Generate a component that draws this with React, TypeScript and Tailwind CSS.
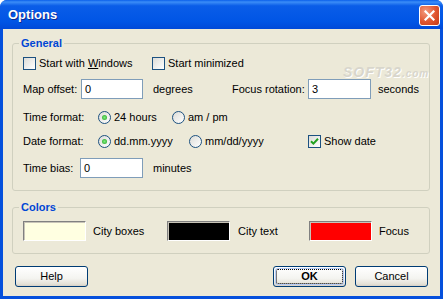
function Check({ checked }: { checked?: boolean }) {
  return (
    <span className="flex h-[13px] w-[13px] shrink-0 items-center justify-center border border-[#1C5180] bg-[linear-gradient(135deg,#DCDCD7,#FFFFFF)]">
      {checked && (
        <svg width="9" height="9" viewBox="0 0 9 9">
          <path d="M1 4.2 L3.4 6.6 L8 1.8" stroke="#21A121" strokeWidth="2" fill="none" />
        </svg>
      )}
    </span>
  );
}

function Radio({ checked }: { checked?: boolean }) {
  return (
    <span className="flex h-[13px] w-[13px] shrink-0 items-center justify-center rounded-full border border-[#1C5180] bg-[linear-gradient(135deg,#DCDCD7,#FFFFFF)]">
      {checked && <span className="h-[5px] w-[5px] rounded-full bg-[radial-gradient(circle,#7DEB7D,#21A121)]" />}
    </span>
  );
}

function Field({ value, w }: { value: string; w: string }) {
  return (
    <div className={`flex h-[20px] ${w} shrink-0 items-center border border-[#7F9DB9] bg-white pl-[3px]`}>
      {value}
    </div>
  );
}

function Swatch({ color }: { color: string }) {
  return (
    <div
      className={`h-[20px] w-[63px] shrink-0 border border-t-[#808080] border-l-[#808080] border-b-white border-r-white shadow-[inset_1px_1px_0_#C8C4B8] ${color}`}
    />
  );
}

function Button({ label, primary }: { label: string; primary?: boolean }) {
  return (
    <button className="flex h-[21px] w-[73px] rounded-[3px] border border-[#003C74] bg-[linear-gradient(to_bottom,#FFFFFF,#F4F4F0_60%,#E3E1D6_90%,#D6D0C5)] p-[2px] text-[11px] font-normal text-black">
      {primary ? (
        <span className="flex flex-1 items-center justify-center rounded-[2px] border border-dotted border-black font-bold shadow-[0_0_0_1px_#B4CAF5]">
          {label}
        </span>
      ) : (
        <span className="flex flex-1 items-center justify-center">{label}</span>
      )}
    </button>
  );
}

export default function App() {
  return (
    <div className="flex h-[299px] w-[443px] flex-col overflow-hidden rounded-t-[7px] bg-[#0550DC] font-['Liberation_Sans',Arial,sans-serif] text-[11px] leading-[13px] text-black">
      <div className="flex h-[29px] shrink-0 items-center justify-between bg-[linear-gradient(to_bottom,#0A5FEA_0%,#3B8DF7_7%,#0A5DE8_20%,#0055E5_75%,#0049D8_100%)] pl-[8px] pr-[3px]">
        <span className="text-[13px] font-bold text-white [text-shadow:1px_1px_0_#0F2A8F]">Options</span>
        <div className="mt-[1px] flex h-[21px] w-[21px] items-center justify-center rounded-[3px] border border-white bg-[radial-gradient(circle_at_30%_30%,#F39A7E,#E0552F_55%,#C33A15)]">
          <svg width="11" height="11" viewBox="0 0 11 11">
            <path d="M1.5 1.5 L9.5 9.5 M9.5 1.5 L1.5 9.5" stroke="white" strokeWidth="2.2" strokeLinecap="square" />
          </svg>
        </div>
      </div>

      <div className="relative mx-[3px] mb-[3px] flex flex-1 flex-col bg-[#ECE9D8] pl-[9px] pr-[10px] pt-[8px]">
        <fieldset className="rounded-[3px] border border-[#D0D0BF] pb-[12px] pl-[10px]">
          <legend className="-ml-[4px] px-[2px] font-bold leading-[13px] text-[#0046D5]">General</legend>

          <div className="mt-[7px] flex h-[13px] items-center">
            <div className="flex w-[129px] items-center gap-[3px]">
              <Check />
              <span>
                Start with <span className="underline">W</span>indows
              </span>
            </div>
            <div className="flex items-center gap-[3px]">
              <Check />
              <span>Start minimized</span>
            </div>
          </div>

          <div className="mt-[9px] flex h-[20px] items-center">
            <span className="w-[58px]">Map offset:</span>
            <Field value="0" w="w-[62px]" />
            <span className="ml-[10px] w-[79px]">degrees</span>
            <span className="w-[76px]">Focus rotation:</span>
            <Field value="3" w="w-[63px]" />
            <span className="ml-[7px]">seconds</span>
          </div>

          <div className="mt-[12px] flex h-[13px] items-center">
            <span className="w-[75px]">Time format:</span>
            <div className="flex w-[74px] items-center gap-[3px]">
              <Radio checked />
              <span>24 hours</span>
            </div>
            <div className="flex items-center gap-[3px]">
              <Radio />
              <span>am / pm</span>
            </div>
          </div>

          <div className="mt-[11px] flex h-[13px] items-center">
            <span className="w-[75px]">Date format:</span>
            <div className="flex w-[91px] items-center gap-[3px]">
              <Radio checked />
              <span>dd.mm.yyyy</span>
            </div>
            <div className="flex w-[119px] items-center gap-[3px]">
              <Radio />
              <span>mm/dd/yyyy</span>
            </div>
            <div className="flex items-center gap-[3px]">
              <Check checked />
              <span>Show date</span>
            </div>
          </div>

          <div className="mt-[10px] flex h-[20px] items-center">
            <span className="w-[57px]">Time bias:</span>
            <Field value="0" w="w-[63px]" />
            <span className="ml-[10px]">minutes</span>
          </div>
        </fieldset>

        <fieldset className="mt-[10px] rounded-[3px] border border-[#D0D0BF] pb-[12px] pl-[10px]">
          <legend className="-ml-[4px] px-[2px] font-bold leading-[13px] text-[#0046D5]">Colors</legend>
          <div className="mt-[7px] flex h-[20px] items-center">
            <Swatch color="bg-[#FFFFE1]" />
            <span className="ml-[7px] w-[74px]">City boxes</span>
            <Swatch color="bg-black" />
            <span className="ml-[8px] w-[71px]">City text</span>
            <Swatch color="bg-[#FF0000]" />
            <span className="ml-[7px]">Focus</span>
          </div>
        </fieldset>

        <div className="mt-[12px] flex pl-[3px] pr-[2px]">
          <Button label="Help" />
          <div className="ml-auto flex gap-[9px]">
            <Button label="OK" primary />
            <Button label="Cancel" />
          </div>
        </div>

        <div className="absolute left-[340px] top-[37px] select-none text-[14px] font-bold italic tracking-[1px] text-[#D8D6CC] [text-shadow:1px_1px_0_#FFFFFF]">
          SOFT32<span className="text-[10px]">.com</span>
        </div>
      </div>
    </div>
  );
}
